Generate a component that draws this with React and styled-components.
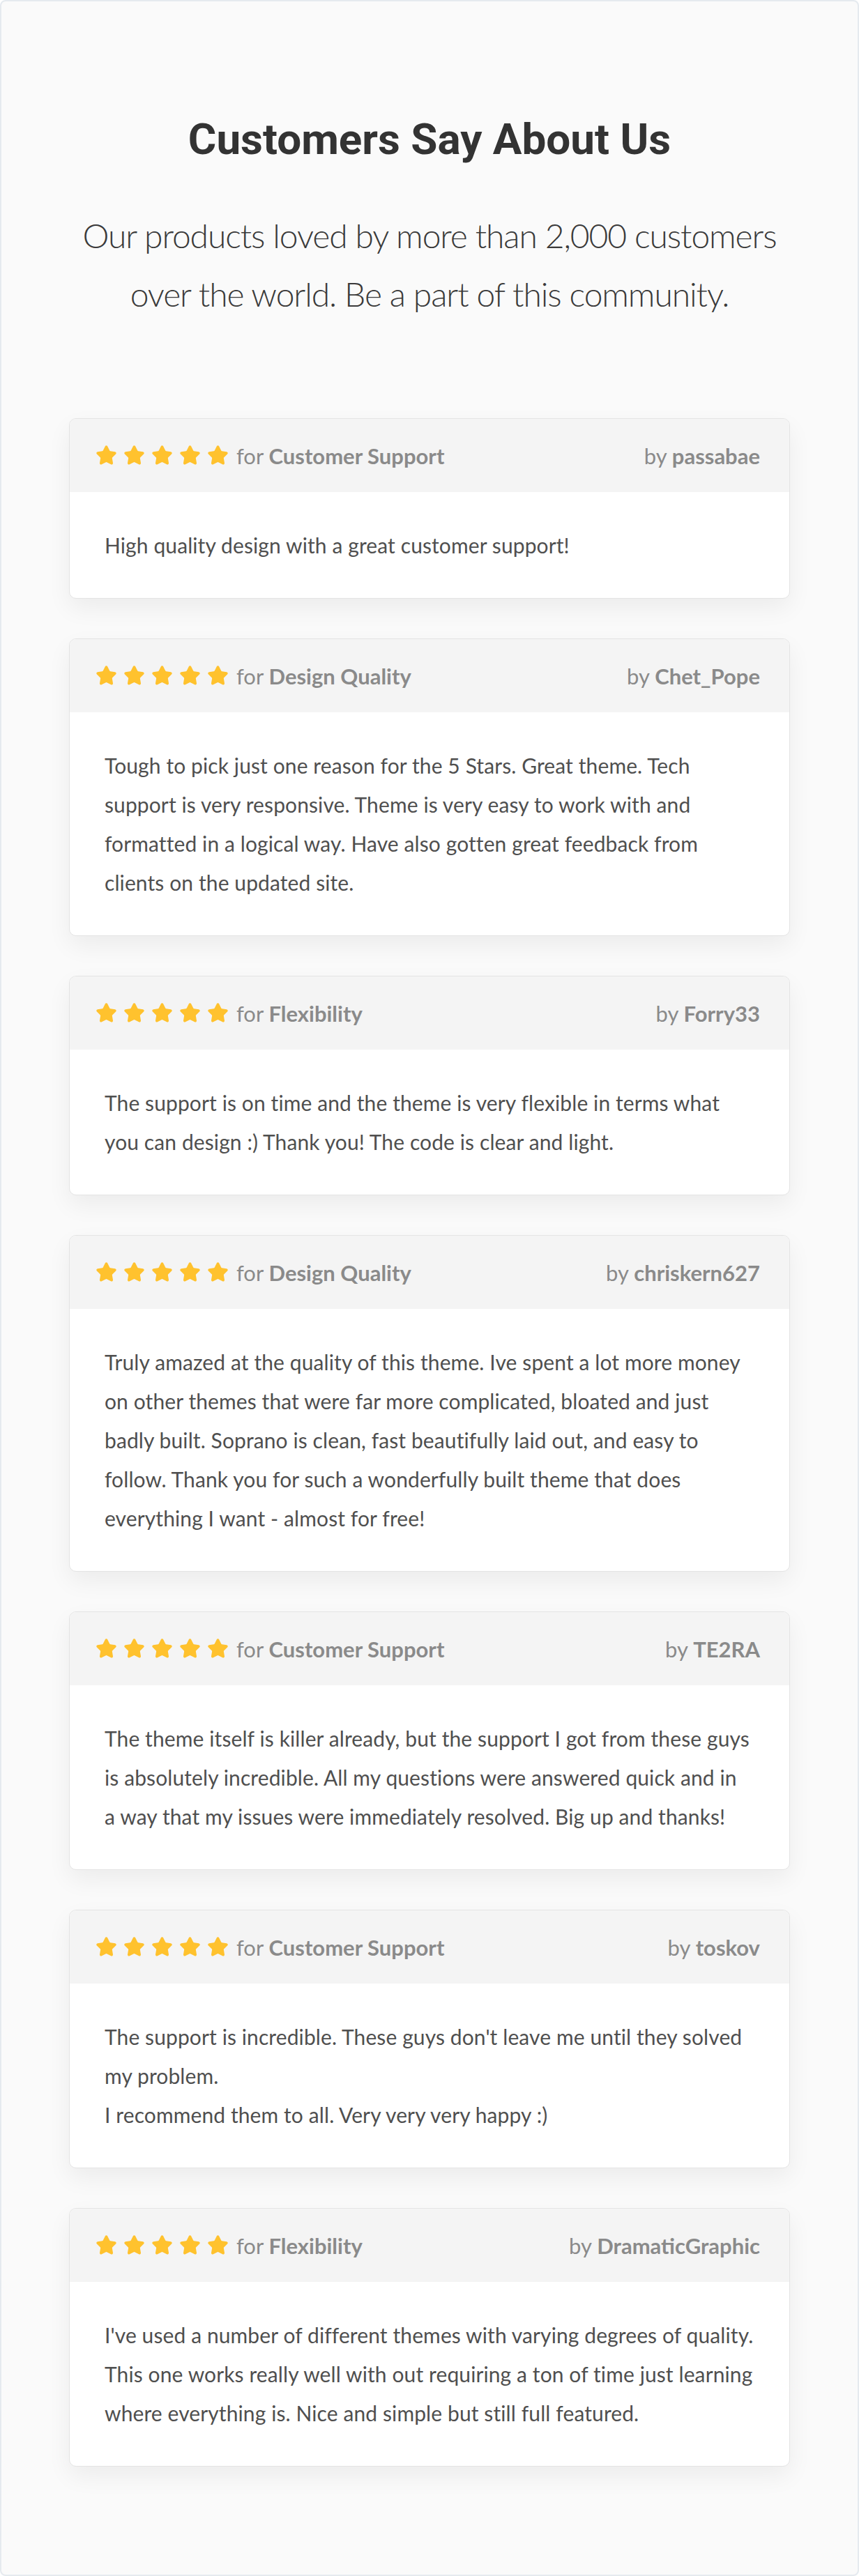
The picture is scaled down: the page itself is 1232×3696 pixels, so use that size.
import styled, { createGlobalStyle } from "styled-components";
import { Star } from "lucide-react";

// lines kept as they break in the design
const reviews = [
  {
    id: 1,
    topic: "Customer Support",
    author: "passabae",
    lines: ["High quality design with a great customer support!"],
  },
  {
    id: 2,
    topic: "Design Quality",
    author: "Chet_Pope",
    lines: [
      "Tough to pick just one reason for the 5 Stars. Great theme. Tech",
      "support is very responsive. Theme is very easy to work with and",
      "formatted in a logical way. Have also gotten great feedback from",
      "clients on the updated site.",
    ],
  },
  {
    id: 3,
    topic: "Flexibility",
    author: "Forry33",
    lines: [
      "The support is on time and the theme is very flexible in terms what",
      "you can design :) Thank you! The code is clear and light.",
    ],
  },
  {
    id: 4,
    topic: "Design Quality",
    author: "chriskern627",
    lines: [
      "Truly amazed at the quality of this theme. Ive spent a lot more money",
      "on other themes that were far more complicated, bloated and just",
      "badly built. Soprano is clean, fast beautifully laid out, and easy to",
      "follow. Thank you for such a wonderfully built theme that does",
      "everything I want - almost for free!",
    ],
  },
  {
    id: 5,
    topic: "Customer Support",
    author: "TE2RA",
    lines: [
      "The theme itself is killer already, but the support I got from these guys",
      "is absolutely incredible. All my questions were answered quick and in",
      "a way that my issues were immediately resolved. Big up and thanks!",
    ],
  },
  {
    id: 6,
    topic: "Customer Support",
    author: "toskov",
    lines: [
      "The support is incredible. These guys don't leave me until they solved",
      "my problem.",
      "I recommend them to all. Very very very happy :)",
    ],
  },
  {
    id: 7,
    topic: "Flexibility",
    author: "DramaticGraphic",
    lines: [
      "I've used a number of different themes with varying degrees of quality.",
      "This one works really well with out requiring a ton of time just learning",
      "where everything is. Nice and simple but still full featured.",
    ],
  },
];

const GlobalStyle = createGlobalStyle`
  * { box-sizing: border-box; }
  body {
    margin: 0;
    background: #ffffff;
    font-family: Lato, "Open Sans", sans-serif;
  }
`;

const App = () => {
  return (
    <>
      <GlobalStyle />
      <Page>
        <Heading>Customers Say About Us</Heading>
        <Lead>
          Our products loved by more than 2,000 customers
          <br />
          over the world. Be a part of this community.
        </Lead>
        <List>
          {reviews.map(({ id, topic, author, lines }) => (
            <Card key={id}>
              <CardHead>
                <Rating>
                  <Stars>
                    {[0, 1, 2, 3, 4].map((i) => (
                      <Star
                        key={i}
                        size={31}
                        color="#ffc22e"
                        fill="#ffc22e"
                        strokeWidth={2}
                      />
                    ))}
                  </Stars>
                  <Meta>
                    for <b>{topic}</b>
                  </Meta>
                </Rating>
                <Meta>
                  by <b>{author}</b>
                </Meta>
              </CardHead>
              <CardBody>
                {lines.map((line, i) => (
                  <Line key={i}>{line}</Line>
                ))}
              </CardBody>
            </Card>
          ))}
        </List>
      </Page>
    </>
  );
};

const Page = styled.div`
  min-height: 3696px;
  padding: 161px 97px 150px;
  background: #fafafa;
  border: 2px solid #e5eaef;
  border-radius: 8px;
`;
const Heading = styled.h1`
  margin: 0;
  font-family: Roboto, "Liberation Sans", sans-serif;
  font-size: 62px;
  line-height: 1.2;
  font-weight: 700;
  color: #333333;
  text-align: center;
`;
const Lead = styled.p`
  margin: 59px 0 0;
  font-family: Lato, sans-serif;
  font-size: 48px;
  line-height: 84px;
  font-weight: 300;
  letter-spacing: -1.1px;
  color: #3a3a3a;
  text-align: center;
`;
const List = styled.div`
  margin-top: 136px;
  display: flex;
  flex-direction: column;
  gap: 57px;
`;
const Card = styled.div`
  background: #ffffff;
  border: 1px solid #e4e4e4;
  border-radius: 10px;
  overflow: hidden;
  box-shadow: 0 14px 34px rgba(0, 0, 0, 0.06);
`;
const CardHead = styled.div`
  height: 105px;
  padding: 0 42px 0 37px;
  background: #f4f4f4;
  display: flex;
  align-items: center;
  justify-content: space-between;
`;
const Rating = styled.div`
  display: flex;
  align-items: center;
  gap: 11px;
`;
const Stars = styled.div`
  display: flex;
  gap: 9px;
`;
const Meta = styled.span`
  font-size: 31px;
  color: #8a8a8a;
  b {
    font-weight: 700;
  }
`;
const CardBody = styled.div`
  padding: 48px 50px;
  font-size: 30px;
  line-height: 56px;
  letter-spacing: 0.1px;
  color: #4f4f4f;
`;
const Line = styled.span`
  display: block;
  white-space: nowrap;
`;

export default App;
